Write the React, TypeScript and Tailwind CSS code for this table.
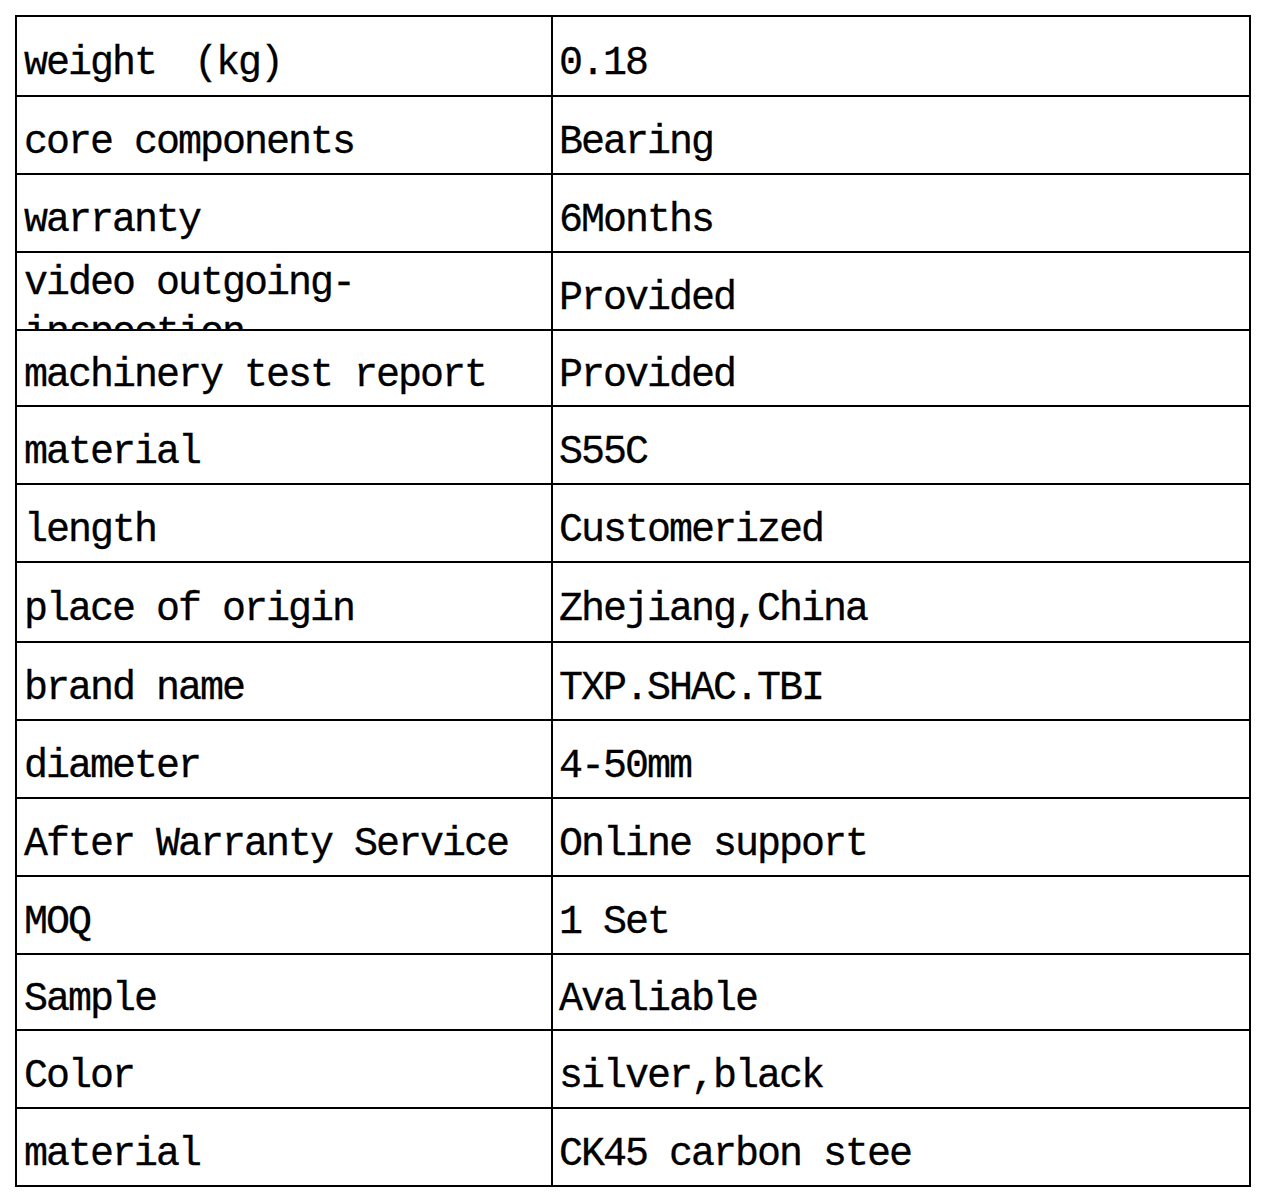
const rows: { k: string; v: string; h: string }[] = [
  { k: 'weight\u3000(kg)', v: '0.18', h: 'h-[78px]' },
  { k: 'core components', v: 'Bearing', h: 'h-[78px]' },
  { k: 'warranty', v: '6Months', h: 'h-[78px]' },
  { k: 'video outgoing-inspection', v: 'Provided', h: 'h-[78px]' },
  { k: 'machinery test report', v: 'Provided', h: 'h-[76px]' },
  { k: 'material', v: 'S55C', h: 'h-[78px]' },
  { k: 'length', v: 'Customerized', h: 'h-[78px]' },
  { k: 'place of origin', v: 'Zhejiang,China', h: 'h-[80px]' },
  { k: 'brand name', v: 'TXP.SHAC.TBI', h: 'h-[78px]' },
  { k: 'diameter', v: '4-50mm', h: 'h-[78px]' },
  { k: 'After Warranty Service', v: 'Online support', h: 'h-[78px]' },
  { k: 'MOQ', v: '1 Set', h: 'h-[78px]' },
  { k: 'Sample', v: 'Avaliable', h: 'h-[76px]' },
  { k: 'Color', v: 'silver,black', h: 'h-[78px]' },
  { k: 'material', v: 'CK45 carbon stee', h: 'h-[78px]' },
];

export default function App() {
  return (
    <div className="w-[1266px] h-[1202px] bg-white pt-[15px] pl-[15px] text-black font-['Liberation_Mono','DejaVu_Sans_Mono',monospace] text-[40px] tracking-[-2px] leading-[55px] [-webkit-text-stroke:0.3px_black]">
      <div className="w-[1236px] border-2 border-black">
        {rows.map((r, i) => {
          const wrap = r.k.length > 24;
          return (
            <div key={i} className={`grid grid-cols-[536px_1fr] ${r.h} ${i > 0 ? 'border-t-2 border-black' : ''}`}>
              <div
                className={`border-r-2 border-black pl-[7px] overflow-hidden flex ${
                  wrap ? 'items-start pt-[6px] leading-[50px]' : 'items-center pt-[14px]'
                }`}
              >
                <span className="whitespace-pre-wrap">{r.k}</span>
              </div>
              <div className="pl-[6px] overflow-hidden flex items-center pt-[14px]">
                <span className="whitespace-pre">{r.v}</span>
              </div>
            </div>
          );
        })}
      </div>
    </div>
  );
}
